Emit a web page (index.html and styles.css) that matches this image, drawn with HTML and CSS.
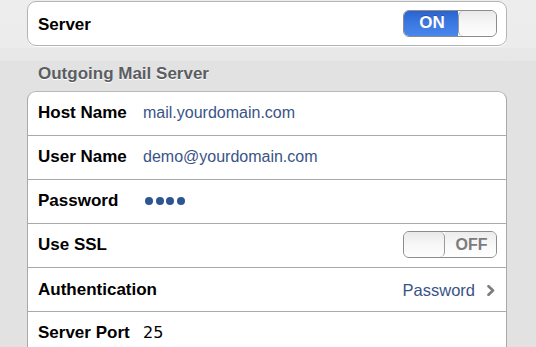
FILE: index.html
```html
<!DOCTYPE html>
<html>
<head>
<meta charset="utf-8">
<link rel="stylesheet" href="styles.css">
</head>
<body>
  <div class="card card-top">
    <div class="row row-first">
      <span class="label label-shift">Server</span>
      <div class="switch switch-on">
        <span class="track-on">ON</span>
        <span class="knob knob-right"></span>
      </div>
    </div>
  </div>

  <div class="section-header">Outgoing Mail Server</div>

  <div class="card">
    <div class="row">
      <span class="label">Host Name</span>
      <span class="value">mail.yourdomain.com</span>
    </div>
    <div class="row">
      <span class="label">User Name</span>
      <span class="value">demo@yourdomain.com</span>
    </div>
    <div class="row">
      <span class="label">Password</span>
      <span class="dots"><i></i><i></i><i></i><i></i></span>
    </div>
    <div class="row">
      <span class="label">Use SSL</span>
      <div class="switch switch-off">
        <span class="knob knob-left"></span>
        <span class="track-off">OFF</span>
      </div>
    </div>
    <div class="row row-auth">
      <span class="label">Authentication</span>
      <span class="detail">Password</span>
      <svg class="chevron" width="8" height="11" viewBox="0 0 8 11"><path d="M1.5 1.2 L6 5.5 L1.5 9.8" fill="none" stroke="#7d7d7d" stroke-width="2.6" stroke-linecap="round" stroke-linejoin="round"/></svg>
    </div>
    <div class="row">
      <span class="label">Server Port</span>
      <span class="port">25</span>
    </div>
  </div>
</body>
</html>
```

FILE: styles.css
```css
* { box-sizing: border-box; }

html, body {
  margin: 0;
  padding: 0;
}

body {
  width: 536px;
  height: 347px;
  overflow: hidden;
  padding-top: 1px;
  background: linear-gradient(#ededed 0, #ececec 48px, #e8e8e8 48px, #e7e7e7 61px, #e2e2e2 61px);
  font-family: "Liberation Sans", Arial, sans-serif;
}

.card {
  margin: 0 29px 0 27px;
  background: #fff;
  border: 1px solid #a9a9a9;
  border-top-color: #b8b8b8;
  border-radius: 9px;
}

.card-top {
  border-color: #b4b4b4;
  box-shadow: 0 1px 0 rgba(255, 255, 255, 0.9);
}

.row {
  height: 44px;
  display: flex;
  align-items: center;
  padding: 0 11px 2px 10px;
  border-top: 1px solid #a9a9a9;
}

.row:first-child {
  height: 43px;
  border-top: none;
}

.row-first {
  padding-bottom: 0;
}

.row-auth {
  padding-bottom: 0;
  padding-top: 1px;
}

.label {
  min-width: 105px;
  font-size: 17px;
  font-weight: bold;
  color: #000;
  flex-shrink: 0;
}

.label-shift {
  padding-top: 3px;
  flex: 1;
}

.value {
  font-size: 16px;
  color: #385487;
}

.dots {
  display: flex;
  gap: 2.7px;
  margin-left: 2px;
}

.dots i {
  width: 8px;
  height: 8px;
  border-radius: 50%;
  background: #2d5593;
}

.detail {
  margin-left: auto;
  font-size: 16.5px;
  color: #385487;
}

.chevron {
  margin-left: 12px;
  margin-top: 1px;
}

.port {
  font-family: "DejaVu Sans", sans-serif;
  font-size: 16px;
  color: #000;
}

.section-header {
  height: 45px;
  padding: 18px 0 0 38px;
  font-size: 17px;
  line-height: 20px;
  font-weight: bold;
  color: #5a5d62;
  text-shadow: 0 1px 0 #fff;
}

.switch {
  margin-left: auto;
  width: 94px;
  height: 27px;
  display: flex;
  border: 1px solid #8c8c8c;
  border-radius: 6px;
  overflow: hidden;
  flex-shrink: 0;
}

.row-first .switch {
  margin-right: -2px;
  margin-top: -1px;
}

.track-on {
  width: 54px;
  display: flex;
  align-items: center;
  justify-content: center;
  font-size: 17px;
  font-weight: bold;
  color: #fff;
  padding-left: 2px;
  background: linear-gradient(#2a63cf, #3a77e0 45%, #4887ec);
  text-shadow: 0 -1px 0 rgba(0, 0, 0, 0.25);
}

.track-off {
  flex: 1;
  display: flex;
  align-items: center;
  justify-content: center;
  font-size: 16px;
  font-weight: bold;
  color: #7c7c7c;
  padding-left: 2px;
  background: linear-gradient(#ececec, #f8f8f8 50%, #fff);
}

.knob {
  width: 40px;
  background: linear-gradient(#e9e9e9, #f7f7f7 50%, #fdfdfd);
}

.knob-right {
  flex: 1;
  border-left: 1px solid #9a9a9a;
  border-radius: 5px;
}

.knob-left {
  width: 41px;
  border-right: 1px solid #9a9a9a;
  border-radius: 5px;
}

.switch-off {
  margin-right: -2px;
}
```
